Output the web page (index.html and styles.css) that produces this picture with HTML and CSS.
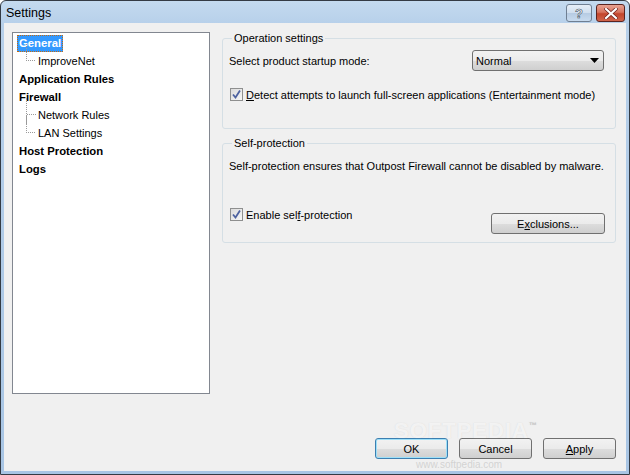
FILE: index.html
```html
<!DOCTYPE html>
<html>
<head>
<meta charset="utf-8">
<link rel="stylesheet" href="styles.css">
</head>
<body>
<div class="window">
  <div class="titlebar">
    <span class="title">Settings</span>
    <div class="tb-buttons">
      <div class="tb-btn help"><span>?</span></div>
      <div class="tb-btn close">
        <svg width="14" height="11" viewBox="0 0 14 11"><path d="M2 1 L12 10 M12 1 L2 10" stroke="#6b1f1a" stroke-width="3.6" stroke-linecap="square"/><path d="M2 1 L12 10 M12 1 L2 10" stroke="#ffffff" stroke-width="2.2" stroke-linecap="square"/></svg>
      </div>
    </div>
  </div>
  <div class="client">
    <div class="main">
      <div class="tree">
        <div class="node bold"><span class="sel">General</span></div>
        <div class="node child last"><span class="conn"></span>ImproveNet</div>
        <div class="node bold">Application Rules</div>
        <div class="node bold">Firewall</div>
        <div class="node child"><span class="conn"></span>Network Rules</div>
        <div class="node child last"><span class="conn"></span>LAN Settings</div>
        <div class="node bold">Host Protection</div>
        <div class="node bold">Logs</div>
      </div>
      <div class="panel">
        <fieldset class="group g1">
          <legend>Operation settings</legend>
          <div class="row mode-row">
            <span>Select product startup mode:</span>
            <div class="combo"><span>Normal</span><svg width="9" height="5" viewBox="0 0 9 5"><path d="M0 0 H9 L4.5 5 Z" fill="#000"/></svg></div>
          </div>
          <label class="check ent">
            <span class="box"><svg width="11" height="11" viewBox="0 0 11 11"><path d="M2 5.5 L4.5 8.5 L9 1.5" fill="none" stroke="#4d62a0" stroke-width="1.8"/></svg></span>
            <span><u>D</u>etect attempts to launch full-screen applications (Entertainment mode)</span>
          </label>
        </fieldset>
        <fieldset class="group g2">
          <legend>Self-protection</legend>
          <div class="desc">Self-protection ensures that Outpost Firewall cannot be disabled by malware.</div>
          <div class="row sp-row">
            <label class="check">
              <span class="box"><svg width="11" height="11" viewBox="0 0 11 11"><path d="M2 5.5 L4.5 8.5 L9 1.5" fill="none" stroke="#4d62a0" stroke-width="1.8"/></svg></span>
              <span>Enable sel<u>f</u>-protection</span>
            </label>
            <div class="btn excl">E<u>x</u>clusions...</div>
          </div>
        </fieldset>
      </div>
    </div>
    <div class="buttons">
      <div class="btn default">OK</div>
      <div class="btn">Cancel</div>
      <div class="btn"><u>A</u>pply</div>
    </div>
    <div class="wm1">SOFTPEDIA<sup>™</sup></div>
    <div class="wm2">www.softpedia.com</div>
  </div>
</div>
</body>
</html>
```
FILE: styles.css
```css
* { box-sizing: border-box; }
html, body { margin: 0; padding: 0; }
body {
  width: 630px; height: 475px; overflow: hidden;
  font-family: "Liberation Sans", Arial, sans-serif;
  font-size: 11px; color: #000;
  background: #ffffff;
}
.window {
  width: 630px; height: 475px;
  border: 1px solid #343b44;
  border-radius: 6px 6px 0 0;
  background: linear-gradient(to bottom, #c4daef 0px, #b7d0ea 23px, #a8c5e4 100%);
  display: flex; flex-direction: column;
}
.titlebar {
  height: 22px;
  display: flex; align-items: center; justify-content: space-between;
  padding: 0 4px 0 5px;
}
.title { font-size: 12.5px; color: #000; padding-top: 1px; }
.tb-buttons { display: flex; gap: 4px; align-self: flex-start; margin-top: 3px; }
.tb-btn {
  height: 18px; border: 1px solid #6f7f92; border-radius: 3px;
  display: flex; align-items: center; justify-content: center;
}
.help {
  width: 26px;
  background: linear-gradient(to bottom, #e6eef7 0%, #cfdeee 50%, #b6cbe2 51%, #c8dbef 100%);
}
.help span { font-size: 13px; font-weight: bold; color: #fff; -webkit-text-stroke: 0.6px #3d4d60; line-height: 1; }
.close {
  width: 29px; border-color: #5a2420;
  background: linear-gradient(to bottom, #e8a393 0%, #d7745f 45%, #c3452c 55%, #d0644b 100%);
}
.client {
  flex: 1;
  margin: 0 3px 3px 3px;
  background: #f0f0f0;
  padding: 9px 9px 0 8px;
  position: relative;
  display: flex; flex-direction: column;
}
.main { display: flex; gap: 12px; }
.tree {
  flex: 0 0 198px;
  width: 198px; height: 362px;
  background: #fff;
  border: 1px solid #828790;
  padding: 1px 0 0 5px;
}
.node { height: 18px; line-height: 18px; white-space: nowrap; font-size: 11px; position: relative; }
.bold { font-weight: bold; padding-left: 1px; font-size: 11.3px; }
.sel {
  display: inline-block; height: 17px; line-height: 15px;
  background: #3399ff; color: #fff;
  border: 1px dotted #c56a0e;
  padding: 0 1px; margin-left: -2px;
}
.child { padding-left: 20px; color: #000; }
.conn {
  position: absolute; left: 8px; top: -8px;
  width: 9px; height: 17px;
  border-left: 1px dotted #9a9a9a;
  border-bottom: 1px dotted #9a9a9a;
}
.child:not(.last) .conn { height: 26px; border-bottom: none; }
.child:not(.last) .conn::after {
  content: ""; position: absolute; left: 0; top: 16px; width: 9px; border-bottom: 1px dotted #9a9a9a;
}
.panel { flex: 1; display: flex; flex-direction: column; gap: 6px; margin-top: -2px; }
.group {
  margin: 0 1px 0 0; padding: 0 10px 0 6px;
  border: 1px solid #d5dfe5; border-radius: 3px;
  min-width: 0;
}
.group legend { padding: 0 2px; margin-left: 3px; line-height: 16px; }
.g1 { height: 99px; }
.g2 { height: 108px; }
.row { display: flex; align-items: center; justify-content: space-between; }
.mode-row { margin-top: 4px; padding-right: 1px; }
.combo {
  width: 132px; height: 21px;
  border: 1px solid #707070; border-radius: 3px;
  background: linear-gradient(to bottom, #f2f2f2 0%, #ebebeb 50%, #dddddd 51%, #cfcfcf 100%);
  display: flex; align-items: center; justify-content: space-between;
  padding: 0 4px 0 3px;
}
.check { display: flex; align-items: center; gap: 3px; white-space: nowrap; }
.box {
  width: 13px; height: 13px; border: 1px solid #8e8f8f;
  background: linear-gradient(135deg, #dcdcdc, #f6f6f6);
  display: flex; align-items: center; justify-content: center;
}
.ent { margin-top: 17px; margin-left: 1px; }
.desc { margin-top: 9px; margin-left: 0; white-space: nowrap; }
.sp-row { margin-top: 36px; align-items: flex-start; }
.sp-row .check { margin-left: 1px; }
.btn {
  height: 21px; width: 73px;
  border: 1px solid #707070; border-radius: 3px;
  background: linear-gradient(to bottom, #f2f2f2 0%, #ebebeb 50%, #dddddd 51%, #cfcfcf 100%);
  display: flex; align-items: center; justify-content: center;
}
.excl { width: 114px; margin-top: 5px; }
.buttons {
  display: flex; justify-content: flex-end; gap: 11px;
  margin-top: 44px; padding-right: 1px;
}
.default {
  border-color: #3c7fb1;
  box-shadow: inset 0 0 0 1px #9ee0f8;
}
.wm1 {
  position: absolute; left: 390px; top: 399px;
  font-size: 22px; font-weight: bold; letter-spacing: 1px; line-height: 18px;
  color: rgba(255,255,255,0.7);
  text-shadow: 0 0 1px rgba(190,190,190,0.5);
  pointer-events: none;
}
.wm1 sup { font-size: 8px; line-height: 8px; color: rgba(170,170,170,0.5); vertical-align: top; }
.wm2 {
  position: absolute; left: 412px; top: 437px;
  font-size: 10px; line-height: 10px; color: rgba(190,190,190,0.6);
  pointer-events: none;
}
```
